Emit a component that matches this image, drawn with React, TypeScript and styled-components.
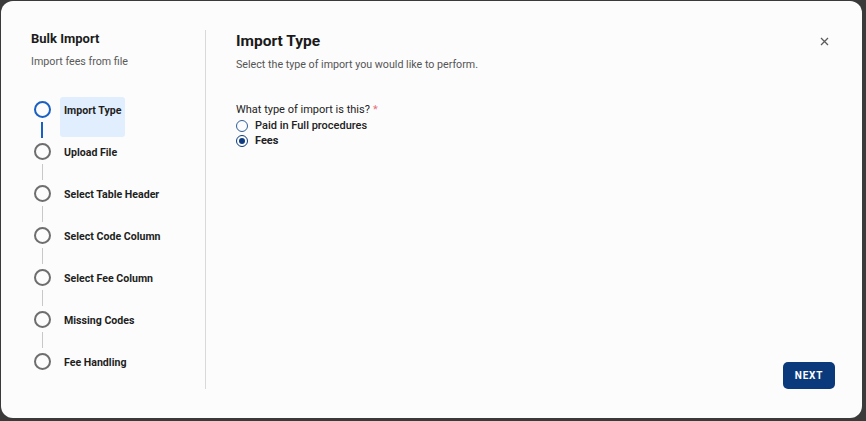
import React, { useState } from 'react'
import styled, { createGlobalStyle } from 'styled-components'

const GlobalStyle = createGlobalStyle`
  html, body {
    margin: 0;
    padding: 0;
    background: #3a3a3a;
    font-family: Roboto, 'Liberation Sans', Arial, sans-serif;
  }
  * { box-sizing: border-box; }
`

const Page = styled.div`
  width: 866px;
  height: 421px;
  padding: 1px 4px 3px 1px;
  background: #3a3a3a;
`

const Modal = styled.div`
  display: flex;
  height: 100%;
  background: #fcfcfc;
  border-radius: 12px;
  padding: 29px 27px 29px 0;
`

const Sidebar = styled.aside`
  width: 205px;
  padding-left: 30px;
  border-right: 1px solid #d9d9d9;
  display: flex;
  flex-direction: column;
`

const SideTitle = styled.div`
  font-size: 13px;
  font-weight: 700;
  line-height: 18px;
  color: #1c1c1c;
`

const SideSub = styled.div`
  margin-top: 6px;
  font-size: 10.7px;
  line-height: 16px;
  color: #5a5a5a;
`

const Steps = styled.ol`
  list-style: none;
  margin: 27px 0 0;
  padding: 0;
`

const StepRow = styled.li`
  display: flex;
  height: 42px;
`

const Track = styled.div`
  width: 22px;
  display: flex;
  flex-direction: column;
  align-items: center;
`

const Dot = styled.span<{ active: boolean }>`
  width: 17px;
  height: 17px;
  margin-top: 4px;
  border-radius: 50%;
  border: 2px solid ${({ active }) => (active ? '#1a5fc4' : '#6e6e6e')};
  flex: none;
`

const Line = styled.span<{ active: boolean }>`
  width: ${({ active }) => (active ? '2px' : '1px')};
  flex: 1;
  margin: 4px 0 1px;
  background: ${({ active }) => (active ? '#1a5fc4' : '#c8c8c8')};
`

const StepLabel = styled.div<{ active: boolean }>`
  margin-left: 7px;
  height: 40px;
  padding: 6px 4px 2px;
  border-radius: 3px;
  background: ${({ active }) => (active ? '#e1eefe' : 'transparent')};
  font-size: 10.6px;
  font-weight: 700;
  line-height: 16px;
  color: #1e1e1e;
`

const Content = styled.section`
  flex: 1;
  padding-left: 30px;
  display: flex;
  flex-direction: column;
`

const Header = styled.div`
  display: flex;
  justify-content: space-between;
  align-items: flex-start;
`

const Title = styled.h2`
  margin: 1px 0 0;
  font-size: 15.5px;
  font-weight: 700;
  line-height: 20px;
  color: #1a1a1a;
`

const CloseButton = styled.button`
  border: none;
  background: transparent;
  padding: 0;
  margin: 7px 6px 0 0;
  width: 9px;
  height: 9px;
  display: flex;
  cursor: pointer;
`

const Subtitle = styled.p`
  margin: 6px 0 0;
  font-size: 10.7px;
  line-height: 16px;
  color: #555;
`

const Question = styled.div`
  margin-top: 29px;
  font-size: 11px;
  line-height: 16px;
  color: #222;
`

const Required = styled.span`
  color: #e8707a;
  margin-left: 3px;
`

const Options = styled.div`
  display: flex;
  flex-direction: column;
`

const Option = styled.label<{ checked: boolean }>`
  display: flex;
  align-items: center;
  height: 15px;
  font-size: 11px;
  font-weight: ${({ checked }) => (checked ? 700 : 500)};
  color: #222;
  cursor: pointer;
`

const Radio = styled.span<{ checked: boolean }>`
  width: 12px;
  height: 12px;
  border-radius: 50%;
  margin-right: 7px;
  border: 1.5px solid ${({ checked }) => (checked ? '#0d3b7e' : '#2f5d9c')};
  display: flex;
  align-items: center;
  justify-content: center;
  &::after {
    content: '';
    width: 6px;
    height: 6px;
    border-radius: 50%;
    background: ${({ checked }) => (checked ? '#0d3b7e' : 'transparent')};
  }
`

const Footer = styled.div`
  margin-top: auto;
  display: flex;
  justify-content: flex-end;
`

const NextButton = styled.button`
  width: 52px;
  height: 27px;
  border: none;
  border-radius: 5px;
  background: #0b3a7c;
  color: #fff;
  font-family: Roboto, 'Liberation Sans', Arial, sans-serif;
  font-size: 10px;
  font-weight: 700;
  letter-spacing: 0.8px;
  cursor: pointer;
`

const steps = [
  'Import Type',
  'Upload File',
  'Select Table Header',
  'Select Code Column',
  'Select Fee Column',
  'Missing Codes',
  'Fee Handling',
]

const options = ['Paid in Full procedures', 'Fees']

export default function App() {
  const [choice, setChoice] = useState('Fees')
  const current = 0

  return (
    <>
      <GlobalStyle />
      <Page>
        <Modal>
          <Sidebar>
            <SideTitle>Bulk Import</SideTitle>
            <SideSub>Import fees from file</SideSub>
            <Steps>
              {steps.map((s, i) => (
                <StepRow key={s}>
                  <Track>
                    <Dot active={i === current} />
                    {i < steps.length - 1 && <Line active={i === current} />}
                  </Track>
                  <StepLabel active={i === current}>{s}</StepLabel>
                </StepRow>
              ))}
            </Steps>
          </Sidebar>
          <Content>
            <Header>
              <Title>Import Type</Title>
              <CloseButton aria-label="Close">
                <svg width="9" height="9" viewBox="0 0 9 9">
                  <path d="M1 1L8 8M8 1L1 8" stroke="#5c5c5c" strokeWidth="1.3" />
                </svg>
              </CloseButton>
            </Header>
            <Subtitle>Select the type of import you would like to perform.</Subtitle>
            <Question>
              What type of import is this?<Required>*</Required>
            </Question>
            <Options>
              {options.map((o) => (
                <Option key={o} checked={choice === o} onClick={() => setChoice(o)}>
                  <Radio checked={choice === o} />
                  {o}
                </Option>
              ))}
            </Options>
            <Footer>
              <NextButton>NEXT</NextButton>
            </Footer>
          </Content>
        </Modal>
      </Page>
    </>
  )
}
